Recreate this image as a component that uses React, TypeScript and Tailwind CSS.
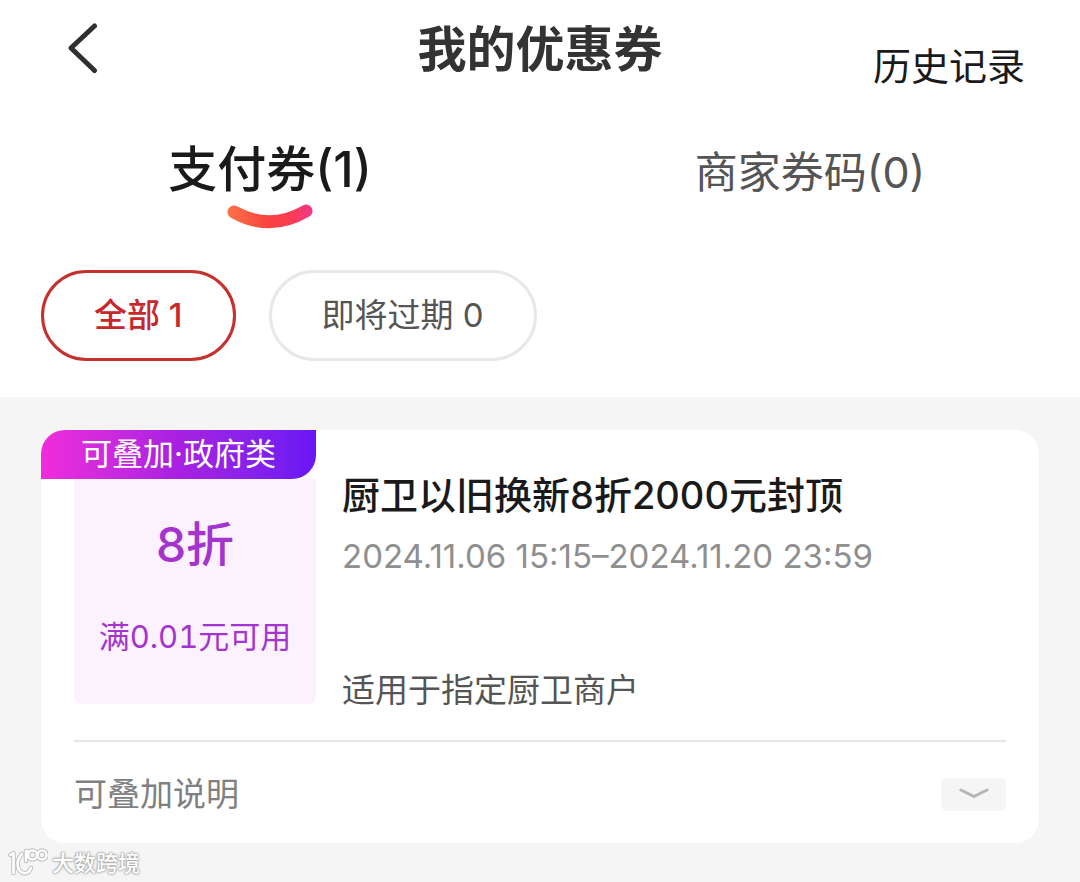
import { useState } from "react";

const tabs = [
  { id: "pay", label: "支付券(1)" },
  { id: "merchant", label: "商家券码(0)" },
];

const filters = [
  { id: "all", label: "全部 1" },
  { id: "expiring", label: "即将过期 0" },
];

function Header() {
  return (
    <header className="grid grid-cols-3 items-start px-[55px] pt-5">
      <button type="button" aria-label="返回" className="justify-self-start pt-[2px] pl-[13px]">
        <svg width="30" height="52" viewBox="0 0 30 52" fill="none">
          <path
            d="M26.500 4 L3 26 L26.500 48.500"
            stroke="#303030"
            strokeWidth="5"
            strokeLinecap="round"
            strokeLinejoin="round"
          />
        </svg>
      </button>
      <h1 className="justify-self-center text-[49px] leading-[60px] font-bold whitespace-nowrap text-[#333333]">
        我的优惠券
      </h1>
      <a href="#history" className="justify-self-end pt-5 text-[38px] leading-[52px] whitespace-nowrap text-[#1a1a1a]">
        历史记录
      </a>
    </header>
  );
}

function Smile() {
  return (
    <svg width="88" height="28" viewBox="0 0 88 28" fill="none" aria-hidden="true">
      <defs>
        <linearGradient id="smile" x1="0" y1="0" x2="88" y2="0" gradientUnits="userSpaceOnUse">
          <stop offset="0" stopColor="#fb7548" />
          <stop offset="0.5" stopColor="#f8413f" />
          <stop offset="0.75" stopColor="#fa3c54" />
          <stop offset="1" stopColor="#f2388e" />
        </linearGradient>
      </defs>
      <path d="M8 8 Q44 28 80 7" stroke="url(#smile)" strokeWidth="13" strokeLinecap="round" />
    </svg>
  );
}

function Coupon() {
  const [open, setOpen] = useState(false);

  return (
    <article className="rounded-3xl bg-white pb-[25px]">
      <div className="flex gap-[26px]">
        {/* discount ticket */}
        <div className="w-[275px] shrink-0">
          <div className="h-[49px] rounded-tl-3xl rounded-br-3xl bg-linear-to-r from-[#f02bdb] via-[#a820e0] to-[#6a14f5] text-center text-[31px] leading-[48px] text-white">
            可叠加·政府类
          </div>
          <div className="ml-[33px] flex h-[225px] flex-col items-center rounded-b-lg bg-[#fbf2fe] pt-9 text-[#a334cd]">
            <p className="text-[48px] leading-[60px] font-medium">8折</p>
            <p className="mt-10 text-[31px] leading-[44px] tabular-nums">满0.01元可用</p>
          </div>
        </div>

        {/* coupon info */}
        <div className="flex min-w-0 flex-1 flex-col pt-10 pr-8">
          <h2 className="text-[38px] leading-[50px] font-medium text-[#1a1a1a]">厨卫以旧换新8折2000元封顶</h2>
          <p className="mt-3 text-[33px] leading-[48px] text-[#8f8f8f]">2024.11.06 15:15–2024.11.20 23:59</p>
          <p className="mt-auto text-[33px] leading-[28px] text-[#555555]">适用于指定厨卫商户</p>
        </div>
      </div>

      <div className="mx-[33px] mt-9 flex items-center justify-between border-t-2 border-[#e6e6e6] pt-7">
        <span className="text-[33px] leading-[48px] text-[#808080]">可叠加说明</span>
        <button
          type="button"
          aria-label="展开可叠加说明"
          aria-expanded={open}
          onClick={() => setOpen(!open)}
          className="flex h-[33px] w-[65px] items-center justify-center rounded-md bg-[#f5f5f5]"
        >
          <svg width="30" height="12" viewBox="0 0 30 12" fill="none">
            <path
              d="M2 2 L15 8.500 L28 2"
              stroke="#b5b5b5"
              strokeWidth="3"
              strokeLinecap="round"
              strokeLinejoin="round"
            />
          </svg>
        </button>
      </div>
    </article>
  );
}

function BrandMark() {
  return (
    <>
      <path d="M2.500 7 L5.500 5 V25" />
      <path d="M14 6 C10 10 9 15 10 19 C11.500 25 17 27 21 23.500 C22 22.500 22.500 21.500 23 20" />
      <path d="M18 13 V3 L20 3" />
      <circle cx="24.500" cy="7" r="4.500" />
      <circle cx="34" cy="7" r="4.500" />
    </>
  );
}

function Brand() {
  return (
    <footer className="flex h-[39px] items-center gap-1 pl-2">
      <svg
        width="40"
        height="30"
        viewBox="0 0 40 30"
        fill="none"
        strokeLinecap="round"
        strokeLinejoin="round"
        aria-hidden="true"
      >
        <g stroke="#bdbdbd" strokeWidth="4.500">
          <BrandMark />
        </g>
        <g stroke="#ffffff" strokeWidth="2.600">
          <BrandMark />
        </g>
      </svg>
      <span className="text-[22px] leading-7 font-medium text-white [text-shadow:0_0_1px_#999,0_0_2px_#999,0_0_3px_#aaa]">
        大数跨境
      </span>
    </footer>
  );
}

export default function App() {
  const [tab, setTab] = useState("pay");
  const [filter, setFilter] = useState("all");

  return (
    <div className="flex min-h-screen flex-col bg-[#f5f5f5] font-['Inter','Noto_Sans_CJK_SC',sans-serif]">
      <div className="bg-white pb-9">
        <Header />

        {/* coupon type */}
        <nav className="mt-11 grid grid-cols-2">
          {tabs.map((item) => (
            <button
              key={item.id}
              type="button"
              onClick={() => setTab(item.id)}
              className="flex h-24 flex-col items-center"
            >
              <span
                className={
                  tab === item.id
                    ? "text-[49px] leading-[68px] font-medium text-[#1a1a1a]"
                    : "text-[43px] leading-[72px] text-[#555555]"
                }
              >
                {item.label}
              </span>
              {tab === item.id && <Smile />}
            </button>
          ))}
        </nav>

        {/* filters */}
        <div className="mt-[38px] flex gap-[33px] px-[41px]">
          {filters.map((item) => (
            <button
              key={item.id}
              type="button"
              onClick={() => setFilter(item.id)}
              className={
                filter === item.id
                  ? "h-[91px] rounded-full border-3 border-[#c4312f] px-[50px] text-[33px] font-medium text-[#c7282d]"
                  : "h-[91px] rounded-full border-3 border-[#e8e8e8] px-[50px] text-[33px] text-[#555555]"
              }
            >
              {item.label}
            </button>
          ))}
        </div>
      </div>

      <main className="px-[41px] pt-[33px]">
        <Coupon />
      </main>

      <Brand />
    </div>
  );
}
